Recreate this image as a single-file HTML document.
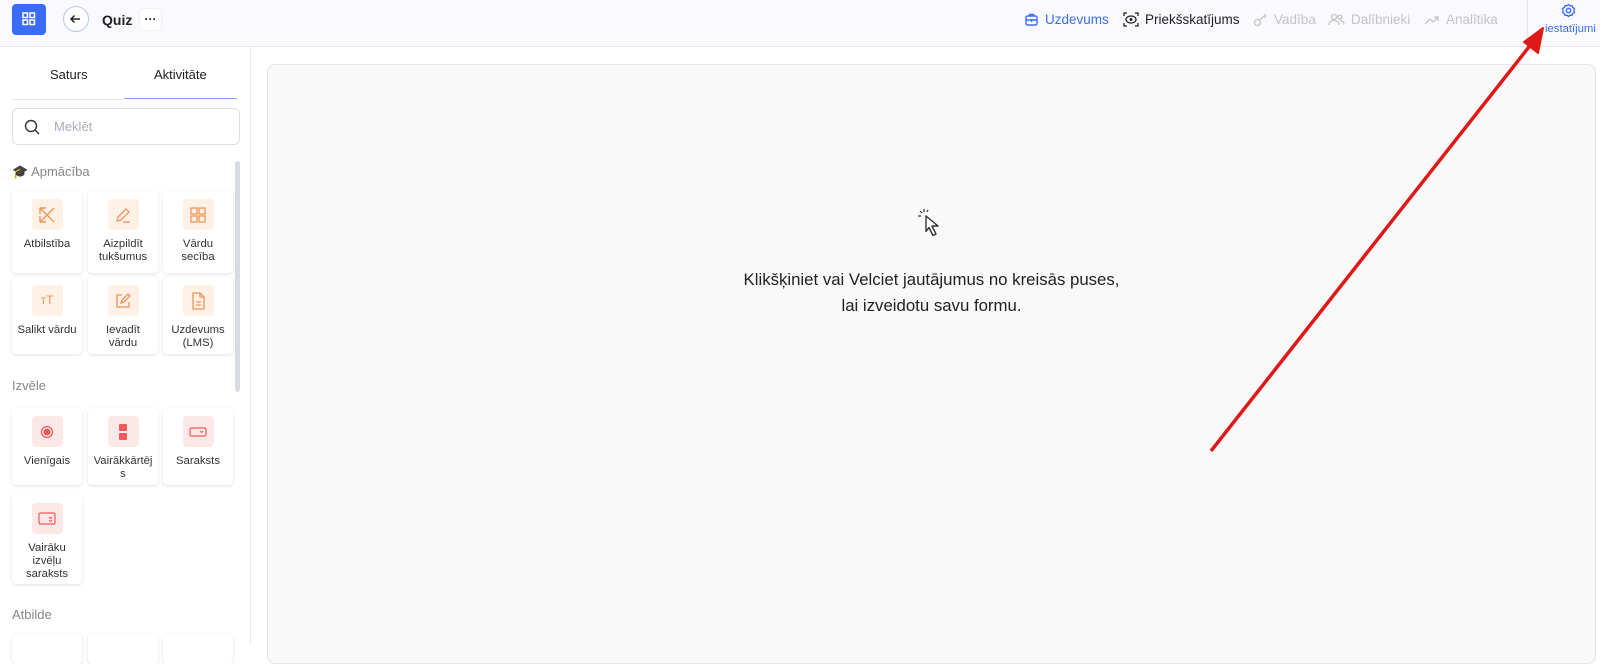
<!DOCTYPE html>
<html><head><meta charset="utf-8">
<style>
*{box-sizing:border-box;margin:0;padding:0}
body{width:1600px;height:644px;overflow:hidden;background:#fff;font-family:"Liberation Sans",sans-serif;color:#222;position:relative}
.hdr{position:absolute;left:0;top:0;width:1600px;height:47px;background:#fafafe;border-bottom:1px solid #e6e6ee}
.logo{position:absolute;left:12px;top:4px;width:34px;height:31px;background:#3b6cf5;border-radius:4px}
.back{position:absolute;left:63px;top:6px;width:26px;height:26px;border:1px solid #b8c8f5;border-radius:50%;background:#fff}
.quiz{position:absolute;left:102px;top:12px;font-weight:bold;font-size:14px;color:#222}
.dots{position:absolute;left:140px;top:9px;width:21px;height:21px;background:#fff;border-radius:4px;box-shadow:0 0 2px #ddd;font-size:12px;text-align:center;line-height:21px;font-weight:bold}
.nav{position:absolute;top:12px;font-size:13.5px;display:flex;align-items:center;gap:6px}
.side{position:absolute;left:0;top:47px;width:251px;height:597px;border-right:1px solid #e8e8ee;background:#fff}
.tab{position:absolute;top:20px;font-size:13px;color:#222}
.search{position:absolute;left:12px;top:61px;width:228px;height:37px;border:1px solid #dde0e8;border-radius:6px}
.sec{position:absolute;left:12px;font-size:13px;color:#888}
.card{position:absolute;width:70px;background:#fff;border-radius:4px;box-shadow:0 1px 3px rgba(0,0,0,.12);text-align:center;font-size:11.3px;color:#333;line-height:13px}
.ic{width:31px;height:31px;margin:8px auto 8px;border-radius:4px;display:flex;align-items:center;justify-content:center}
.o{background:#fff1e6}.r{background:#fde8e8}
.main{position:absolute;left:267px;top:64px;width:1329px;height:600px;background:#f9f9f9;border:1px solid #e6e6ea;border-radius:8px}
.msg{position:absolute;left:267px;width:1329px;text-align:center;font-size:16.8px;color:#222}
.scroll{position:absolute;left:235px;top:161px;width:5px;height:231px;background:#d8dbe2;border-radius:3px}
</style></head><body>
<div class="hdr">
<div class="logo"><svg width="34" height="31"><g fill="none" stroke="#fff" stroke-width="1.5"><rect x="11" y="9" width="4.5" height="4.5"/><rect x="18" y="9" width="4.5" height="4.5"/><rect x="11" y="16" width="4.5" height="4.5"/><rect x="18" y="16" width="4.5" height="4.5"/></g></svg></div>
<div class="back"><svg width="24" height="24"><path d="M7 12h9M10.5 8.5l-3.5 3.5 3.5 3.5" fill="none" stroke="#222" stroke-width="1.5"/></svg></div>
<div class="quiz">Quiz</div>
<div class="dots">···</div>
<div class="nav" style="left:1024px;color:#3b6cf5"><svg width="15" height="15"><rect x="2" y="4" width="11" height="9" rx="1.5" fill="none" stroke="#3b6cf5" stroke-width="1.4"/><path d="M5.5 4V2.5h4V4M2 8h11M7.5 7v3" stroke="#3b6cf5" stroke-width="1.4" fill="none"/></svg>Uzdevums</div>
<div class="nav" style="left:1123px;color:#222"><svg width="16" height="15"><path d="M1 4V1h3M12 1h3v3M15 11v3h-3M4 14H1v-3" stroke="#222" stroke-width="1.3" fill="none"/><ellipse cx="8" cy="7.5" rx="5" ry="3.5" fill="none" stroke="#222" stroke-width="1.3"/><circle cx="8" cy="7.5" r="1.5" fill="#222"/></svg>Priekšskatījums</div>
<div class="nav" style="left:1253px;color:#c4c4c8"><svg width="15" height="15"><circle cx="4.5" cy="10.5" r="3" fill="none" stroke="#c4c4c8" stroke-width="1.3"/><path d="M7 8l6-6M11 4l2 2" stroke="#c4c4c8" stroke-width="1.3"/></svg>Vadība</div>
<div class="nav" style="left:1328px;color:#c4c4c8"><svg width="17" height="15"><circle cx="6" cy="5" r="2.5" fill="none" stroke="#c4c4c8" stroke-width="1.3"/><circle cx="12" cy="5" r="2" fill="none" stroke="#c4c4c8" stroke-width="1.3"/><path d="M1 13c0-3 2-4.5 5-4.5s5 1.5 5 4.5M12 8.5c2.5 0 4 1.5 4 4" stroke="#c4c4c8" stroke-width="1.3" fill="none"/></svg>Dalībnieki</div>
<div class="nav" style="left:1424px;color:#c4c4c8"><svg width="16" height="15"><path d="M1 12l5-5 3 3 5-5M10 5h4v4" stroke="#c4c4c8" stroke-width="1.3" fill="none"/></svg>Analītika</div>
<div style="position:absolute;left:1527px;top:0;width:1px;height:47px;background:#e6e6ee"></div>
<svg style="position:absolute;left:1561px;top:3px" width="15" height="15"><circle cx="7.5" cy="7.5" r="2.2" fill="none" stroke="#3b6cf5" stroke-width="1.4"/><path d="M7.5 1.5l1.5 1.3 2-.2.7 1.9 1.8 1-.6 2 .6 2-1.8 1-.7 1.9-2-.2-1.5 1.3-1.5-1.3-2 .2-.7-1.9-1.8-1 .6-2-.6-2 1.8-1 .7-1.9 2 .2z" fill="none" stroke="#3b6cf5" stroke-width="1.3"/></svg>
<div style="position:absolute;left:1545px;top:23px;font-size:11.3px;color:#3b6cf5">iestatījumi</div>
</div>
<div class="side">
<div class="tab" style="left:50px">Saturs</div>
<div class="tab" style="left:154px">Aktivitāte</div>
<div style="position:absolute;left:12px;top:52px;width:112px;height:1px;background:#e6e6ee"></div>
<div style="position:absolute;left:124px;top:51px;width:113px;height:1px;background:#8aa6f5"></div>
<div class="search"><svg style="position:absolute;left:11px;top:10px" width="16" height="16"><circle cx="7" cy="7" r="5.5" fill="none" stroke="#333" stroke-width="1.4"/><path d="M11 11l4 4" stroke="#333" stroke-width="1.4"/></svg><span style="position:absolute;left:41px;top:10px;font-size:13px;color:#a8acb8">Meklēt</span></div>
<div class="sec" style="top:117px">🎓 Apmācība</div>
<div class="sec" style="top:331px">Izvēle</div>
<div class="sec" style="top:560px">Atbilde</div>
</div>
<div class="scroll"></div>
<div class="card" style="left:12px;top:191px;height:82px"><div class="ic o"><svg width="20" height="20"><path d="M3 3l14 14M3 3v6M3 3h6M17 3L3 17M3 17v-6M3 17h6" stroke="#f0945a" stroke-width="1.4" fill="none"/></svg></div>Atbilstība</div>
<div class="card" style="left:88px;top:191px;height:82px"><div class="ic o"><svg width="20" height="20"><path d="M4 16l1-4 8-8 3 3-8 8zM10 17h7" stroke="#f0945a" stroke-width="1.3" fill="none"/></svg></div>Aizpildīt<br>tukšumus</div>
<div class="card" style="left:163px;top:191px;height:82px"><div class="ic o"><svg width="20" height="20"><g fill="none" stroke="#f0945a" stroke-width="1.3"><rect x="3" y="3" width="6" height="6"/><rect x="11" y="3" width="6" height="6"/><rect x="3" y="11" width="6" height="6"/><rect x="11" y="11" width="6" height="6"/></g></svg></div>Vārdu<br>secība</div>
<div class="card" style="left:12px;top:277px;height:77px"><div class="ic o"><span style="color:#f0945a;font-size:12px">ᴛT</span></div>Salikt vārdu</div>
<div class="card" style="left:88px;top:277px;height:77px"><div class="ic o"><svg width="20" height="20"><path d="M9 4H4v12h12v-5M8 12l1-3 6-6 2 2-6 6z" stroke="#f0945a" stroke-width="1.3" fill="none"/></svg></div>Ievadīt<br>vārdu</div>
<div class="card" style="left:163px;top:277px;height:77px"><div class="ic o"><svg width="20" height="20"><path d="M5 2h7l4 4v12H5zM12 2v4h4M8 11h5M8 14h5" stroke="#f0945a" stroke-width="1.3" fill="none"/></svg></div>Uzdevums<br>(LMS)</div>
<div class="card" style="left:12px;top:408px;height:77px"><div class="ic r"><svg width="20" height="20"><circle cx="10" cy="10" r="5.5" fill="none" stroke="#ee5a5a" stroke-width="1.2"/><circle cx="10" cy="10" r="3.5" fill="#ee5a5a"/></svg></div>Vienīgais</div>
<div class="card" style="left:88px;top:408px;height:77px"><div class="ic r"><svg width="20" height="20"><rect x="6" y="2" width="8" height="7" rx="1" fill="#ee5a5a"/><rect x="6" y="11" width="8" height="7" rx="1" fill="#ee5a5a"/></svg></div>Vairākkārtēj<br>s</div>
<div class="card" style="left:163px;top:408px;height:77px"><div class="ic r"><svg width="20" height="20"><rect x="2" y="6" width="16" height="8" rx="1.5" fill="none" stroke="#ee5a5a" stroke-width="1.2"/><path d="M12 9l1.5 1.5L15 9" stroke="#ee5a5a" fill="none"/></svg></div>Saraksts</div>
<div class="card" style="left:12px;top:495px;height:89px"><div class="ic r"><svg width="20" height="20"><rect x="2" y="4" width="16" height="11" rx="1.5" fill="none" stroke="#ee5a5a" stroke-width="1.2"/><path d="M12 8l1.5 1.5L15 8M12 11l1.5 1.5L15 11" stroke="#ee5a5a" fill="none"/></svg></div>Vairāku<br>izvēļu<br>saraksts</div>
<div class="card" style="left:12px;top:634px;height:30px"></div>
<div class="card" style="left:88px;top:634px;height:30px"></div>
<div class="card" style="left:163px;top:634px;height:30px"></div>
<div class="main"></div>
<svg style="position:absolute;left:917px;top:208px" width="30" height="34"><path d="M3 3l2 2M7 1v3M11 2l-1 2M1 8h3" stroke="#333" stroke-width="1.2"/><path d="M9 8l12 10h-6l4 8-3 1.5-4-8-3 4z" fill="#fff" stroke="#333" stroke-width="1.4" stroke-linejoin="round"/></svg>
<div class="msg" style="top:270px">Klikšķiniet vai Velciet jautājumus no kreisās puses,</div>
<div class="msg" style="top:296px">lai izveidotu savu formu.</div>
<svg style="position:absolute;left:0;top:0" width="1600" height="644"><path d="M1211 451L1532 43" stroke="#e01818" stroke-width="3.5"/><path d="M1543 28L1524 42L1538 53z" fill="#e01818" stroke="#e01818" stroke-width="2" stroke-linejoin="round"/></svg>
</body></html>
